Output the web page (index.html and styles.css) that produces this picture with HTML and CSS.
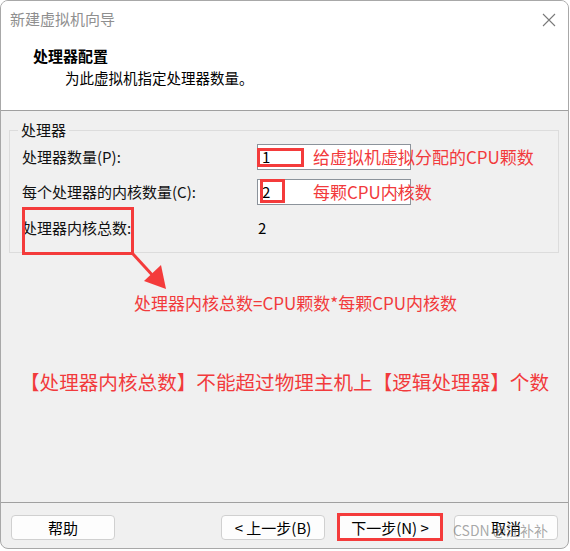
FILE: index.html
```html
<!DOCTYPE html>
<html lang="zh">
<head>
<meta charset="utf-8">
<title>新建虚拟机向导</title>
<link rel="stylesheet" href="styles.css">
</head>
<body>
<div class="window">
  <div class="top">
    <div class="titlebar">
      <span class="title">新建虚拟机向导</span>
      <svg class="close" width="14" height="14" viewBox="0 0 14 14"><path d="M1 1 L13 13 M13 1 L1 13" stroke="#7a7a7a" stroke-width="1.1" fill="none"/></svg>
    </div>
    <div class="header">
      <div class="h-title">处理器配置</div>
      <div class="h-sub">为此虚拟机指定处理器数量。</div>
    </div>
  </div>

  <div class="body">
    <fieldset class="group">
      <legend>处理器</legend>
      <div class="grid">
        <div class="label">处理器数量(P):</div>
        <div class="combo">
          <span class="val">1</span>
          <svg class="chev" width="9" height="6" viewBox="0 0 9 6"><path d="M0.5 0.5 L4.5 4.5 L8.5 0.5" stroke="#8a8a8a" stroke-width="1" fill="none"/></svg>
          <span class="mark mark1"></span>
          <span class="note">给虚拟机虚拟分配的CPU颗数</span>
        </div>
        <div class="label">每个处理器的内核数量(C):</div>
        <div class="combo">
          <span class="val">2</span>
          <svg class="chev" width="9" height="6" viewBox="0 0 9 6"><path d="M0.5 0.5 L4.5 4.5 L8.5 0.5" stroke="#8a8a8a" stroke-width="1" fill="none"/></svg>
          <span class="mark mark2"></span>
          <span class="note">每颗CPU内核数</span>
        </div>
        <div class="label total">处理器内核总数:<span class="mark mark3"></span></div>
        <div class="value">2</div>
      </div>
    </fieldset>

    <svg class="arrow" width="180" height="190" viewBox="0 0 180 190">
      <path d="M132 143 L154 167" stroke="#f43b3b" stroke-width="3" fill="none"/>
      <polygon points="165,178 143,170 160,154" fill="#f43b3b"/>
    </svg>

    <div class="formula">处理器内核总数=CPU颗数*每颗CPU内核数</div>
    <div class="big">【处理器内核总数】不能超过物理主机上【逻辑处理器】个数</div>
  </div>

  <div class="footer">
    <button class="btn">帮助</button>
    <div class="spacer"></div>
    <button class="btn">&lt; 上一步(B)</button>
    <button class="btn next">下一步(N) &gt;</button>
    <button class="btn cancel">取消</button>
    <span class="watermark">CSDN @汪补补</span>
  </div>
</div>
</body>
</html>
```

FILE: styles.css
```css
* { box-sizing: border-box; }
html, body { margin: 0; padding: 0; background: #ffffff; }
body {
  font-family: "Noto Sans CJK SC", "Noto Sans", sans-serif;
  color: #111;
}
.window {
  width: 569px;
  height: 549px;
  border: 1px solid #a8a8a8;
  border-radius: 8px;
  overflow: hidden;
  display: flex;
  flex-direction: column;
  background: #f0f0f0;
}
.top {
  height: 110px;
  background: #fff;
  border-bottom: 1px solid #a0a0a0;
}
.titlebar {
  height: 37px;
  display: flex;
  align-items: flex-start;
  justify-content: space-between;
  padding: 8px 12px 0 9px;
}
.title {
  font-size: 15px;
  line-height: 20px;
  color: #8f8f8f;
}
.close { margin-top: 4px; }
.header { padding: 8px 0 0 32px; }
.h-title {
  font-size: 15px;
  line-height: 20px;
  font-weight: 700;
  color: #000;
}
.h-sub {
  margin-top: 2px;
  padding-left: 32px;
  font-size: 14.5px;
  line-height: 20px;
  color: #000;
}
.body {
  flex: 1;
  position: relative;
}
.group {
  margin: 10px 9px 0 8px;
  padding: 5px 0 12px 12px;
  border: 1px solid #dcdcdc;
  min-width: 0;
}
.group legend {
  margin-left: -4px;
  padding: 0 3px;
  font-size: 15px;
  line-height: 18px;
  color: #111;
}
.grid {
  display: grid;
  grid-template-columns: 235px 154px;
  grid-template-rows: 26px 26px 26px;
  row-gap: 9px;
  align-items: center;
}
.label {
  font-size: 15px;
  line-height: 20px;
  color: #111;
}
.total { position: relative; margin-top: 1px; }
.combo {
  position: relative;
  height: 26px;
  background: #fff;
  border: 1px solid #8c939b;
  display: flex;
  align-items: center;
  padding-left: 4px;
}
.val, .value {
  font-size: 15px;
  line-height: 20px;
  color: #000;
}
.value { padding-left: 1px; margin-top: 1px; }
.chev { position: absolute; right: 6px; top: 10px; }
.mark {
  position: absolute;
  border: 3px solid #f43b3b;
}
.mark1 { left: -1px; top: 3px; width: 47px; height: 19px; }
.mark2 { left: 2px; top: -1px; width: 25px; height: 24px; }
.mark3 { left: 0; top: -11px; width: 112px; height: 48px; }
.note {
  position: absolute;
  left: 55px;
  top: 1px;
  font-size: 17px;
  line-height: 22px;
  color: #f23a3c;
  white-space: nowrap;
}
.arrow { position: absolute; left: 0; top: 0; }
.formula {
  margin-top: 38px;
  padding-left: 133px;
  font-size: 17px;
  line-height: 24px;
  color: #f23a3c;
  white-space: nowrap;
}
.big {
  margin-top: 53px;
  padding-left: 19px;
  font-size: 19.6px;
  line-height: 28px;
  color: #f23a3c;
  white-space: nowrap;
}
.footer {
  position: relative;
  height: 46px;
  border-top: 1px solid #a0a0a0;
  display: flex;
  align-items: flex-start;
  padding: 12px 10px 0 10px;
  gap: 12px;
}
.spacer { flex: 1; }
.btn {
  position: relative;
  width: 104px;
  height: 25px;
  border: 1px solid #d0d0d0;
  border-radius: 4px;
  background: #fdfdfd;
  font-family: "Noto Sans CJK SC", "Noto Sans", sans-serif;
  font-size: 15px;
  line-height: 20px;
  color: #000;
  padding: 0;
}
.next { margin-left: 1px; }
.next::after {
  content: "";
  position: absolute;
  left: -2px; top: -3px; right: -2px; bottom: -2px;
  border: 3px solid #f43b3b;
}
.watermark {
  position: absolute;
  left: 452px;
  top: 17px;
  font-size: 14px;
  line-height: 20px;
  color: rgba(110, 110, 110, 0.6);
  white-space: nowrap;
}
```
